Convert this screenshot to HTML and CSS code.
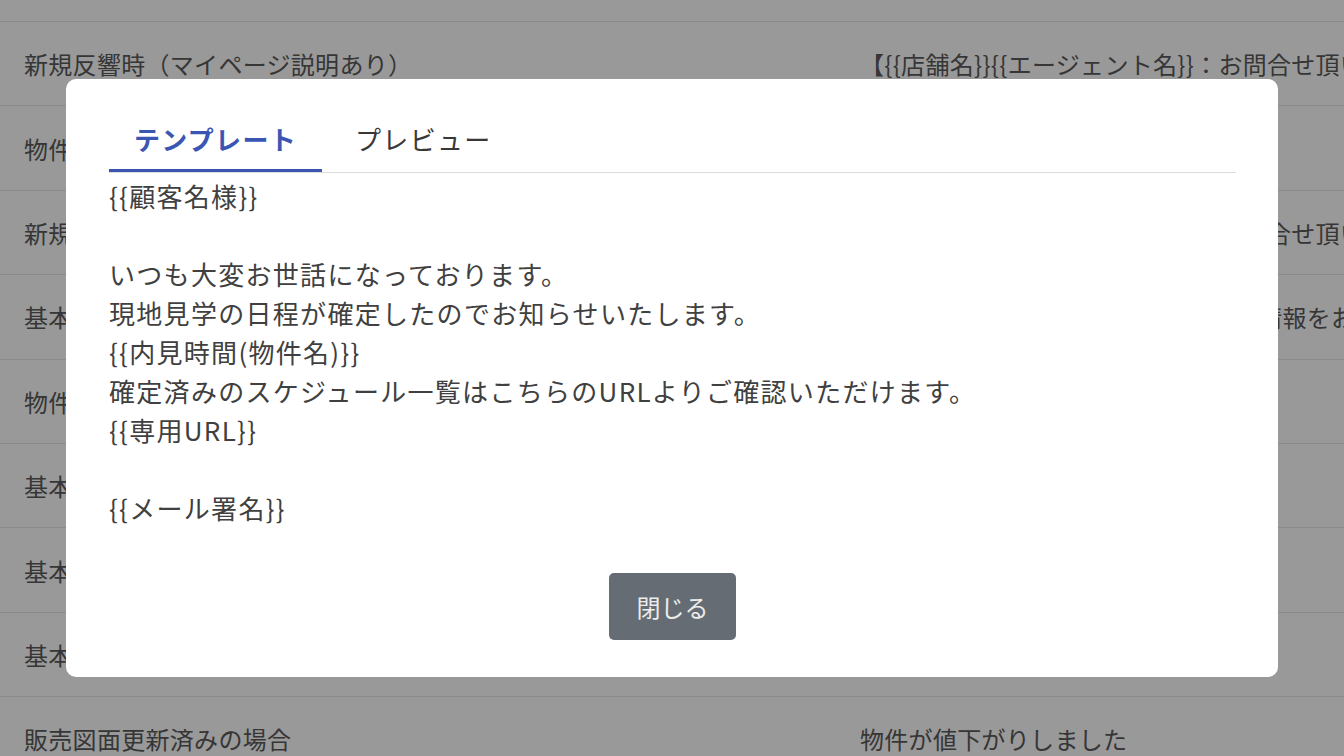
FILE: index.html
```html
<!DOCTYPE html>
<html lang="ja">
<head>
  <meta charset="UTF-8">
  <meta name="viewport" content="width=device-width, initial-scale=1">
  <title>メールテンプレート</title>
  <link rel="stylesheet" href="styles.css">
</head>
<body>
  <div class="template-list">
    <div class="row"><div class="cell">テンプレート名</div><div class="cell">件名</div></div>
    <div class="row"><div class="cell">新規反響時（マイページ説明あり）</div><div class="cell">【{{店舗名}}{{エージェント名}}：お問合せ頂いた物件について</div></div>
    <div class="row"><div class="cell">物件提案時</div><div class="cell">物件のご提案</div></div>
    <div class="row"><div class="cell">新規反響時（マイページ説明なし）</div><div class="cell">【{{店舗名}}{{エージェント名}}：お問合せ頂いた物件について</div></div>
    <div class="row"><div class="cell">基本情報入力依頼</div><div class="cell">【{{店舗名}}】ご希望条件に合う物件情報をお届けします</div></div>
    <div class="row"><div class="cell">物件確認依頼</div><div class="cell">物件のご確認</div></div>
    <div class="row"><div class="cell">基本情報更新時</div><div class="cell">内見日程のご連絡</div></div>
    <div class="row"><div class="cell">基本情報確認</div><div class="cell">内見日程のご確認</div></div>
    <div class="row"><div class="cell">基本情報変更完了</div><div class="cell">変更完了のお知らせ</div></div>
    <div class="row"><div class="cell">販売図面更新済みの場合</div><div class="cell">物件が値下がりしました</div></div>
  </div>

  <div class="backdrop">
    <div class="modal">
      <div class="tabs">
        <button class="tab active">テンプレート</button>
        <button class="tab">プレビュー</button>
      </div>
      <div class="template-body">{{顧客名様}}

いつも大変お世話になっております。
現地見学の日程が確定したのでお知らせいたします。
{{内見時間(物件名)}}
確定済みのスケジュール一覧はこちらのURLよりご確認いただけます。
{{専用URL}}

{{メール署名}}</div>
      <div class="modal-footer">
        <button class="close-btn">閉じる</button>
      </div>
    </div>
  </div>
</body>
</html>
```

FILE: styles.css
```css
body { margin: 0; font-family: "Noto Sans CJK JP", "Noto Sans", sans-serif; background: #fff; color: #5a5a5a; overflow: hidden; }
.template-list { margin-top: -62.4px; }
.row { display: grid; grid-template-columns: 836px 1fr; height: 84.4px; box-sizing: border-box; border-bottom: 1px solid #e6e6e6; align-items: center; padding-left: 24px; font-size: 24px; letter-spacing: 0.3px; white-space: nowrap; overflow: hidden; }
.cell { overflow: hidden; }

.backdrop { position: fixed; inset: 0; background: rgba(0,0,0,0.4); display: flex; align-items: center; justify-content: center; }
.modal { width: 1212px; box-sizing: border-box; background: #fff; border-radius: 10px; padding: 40px 42px 37px 43px; color: #404040; font-size: 26px; line-height: 39px; letter-spacing: 1.3px; }

.tabs { display: flex; gap: 8px; border-bottom: 1px solid #dcdcdc; }
.tab { font: inherit; letter-spacing: inherit; background: none; border: none; border-bottom: 3px solid transparent; padding: 0 25px 11px; color: #383838; cursor: pointer; }
.tab.active { color: #3b55b2; font-weight: bold; border-bottom-color: #3b55b2; }

.template-body { white-space: pre-line; margin-top: 3px; }

.modal-footer { display: flex; justify-content: center; margin-top: 46px; }
.close-btn { font: inherit; font-size: 24px; line-height: 36px; letter-spacing: 0; background: #656c74; color: #ececec; border: none; border-radius: 5px; padding: 15.5px 27.5px; cursor: pointer; }
```
